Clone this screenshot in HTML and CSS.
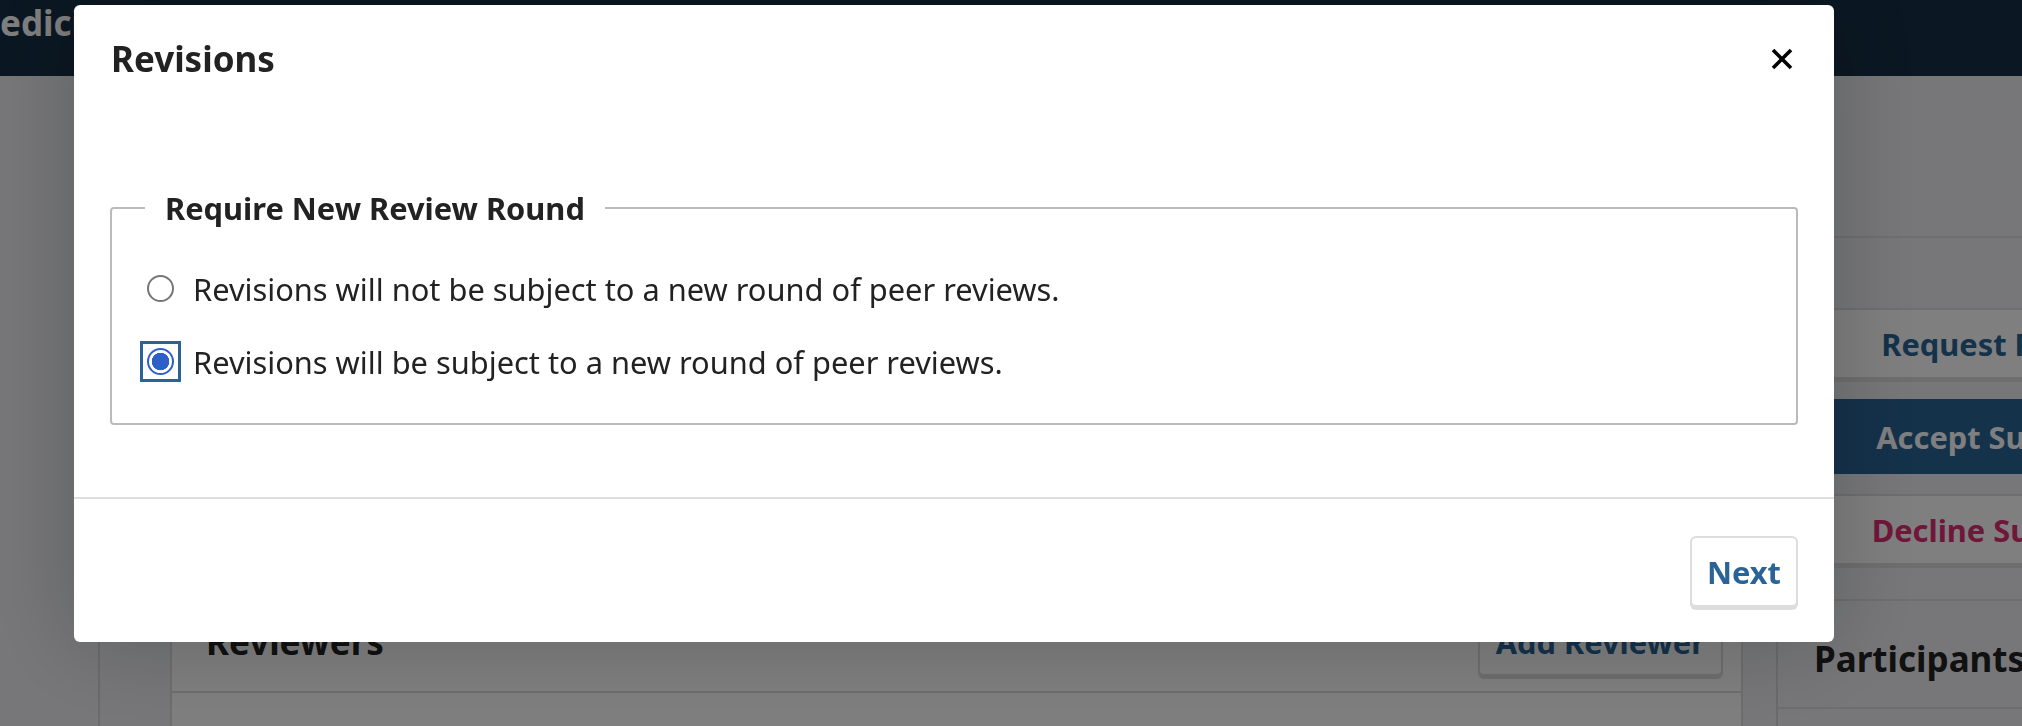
FILE: index.html
```html
<!DOCTYPE html>
<html lang="en">
<head>
<meta charset="utf-8">
<title>Revisions</title>
<link rel="stylesheet" href="styles.css">
</head>
<body>
<div class="page">
  <header class="topbar"><span class="brand">edicine</span></header>
  <div class="main">
    <div class="leftnav"></div>
    <div class="workspace">
      <section class="card">
        <div class="card-head">
          <h2 class="card-title">Reviewers</h2>
          <button class="btn btn-plain" type="button">Add Reviewer</button>
        </div>
        <div class="card-row"></div>
      </section>
    </div>
    <aside class="sidebar">
      <div class="actions">
        <button class="btn btn-side" type="button">Request Revisions</button>
        <button class="btn btn-side btn-primary" type="button">Accept Submission</button>
        <button class="btn btn-side btn-warn" type="button">Decline Submission</button>
      </div>
      <h2 class="side-title">Participants</h2>
    </aside>
  </div>
</div>
<div class="backdrop"></div>
<div class="modal" role="dialog" aria-labelledby="modal-title">
  <div class="modal-header">
    <h1 class="modal-title" id="modal-title">Revisions</h1>
    <button class="close" type="button" aria-label="Close">
      <svg width="22" height="22" viewBox="0 0 22 22"><path d="M2 2 L20 20 M20 2 L2 20" stroke="#000" stroke-width="3.6" fill="none"/></svg>
    </button>
  </div>
  <div class="modal-body">
    <fieldset class="group">
      <legend class="group-legend">Require New Review Round</legend>
      <label class="option"><span class="radio-wrap"><input type="radio" name="round" class="radio"></span><span>Revisions will not be subject to a new round of peer reviews.</span></label>
      <label class="option"><span class="radio-wrap is-focused"><input type="radio" name="round" class="radio" checked></span><span>Revisions will be subject to a new round of peer reviews.</span></label>
    </fieldset>
  </div>
  <div class="modal-footer">
    <button class="btn btn-next" type="button">Next</button>
  </div>
</div>
</body>
</html>
```
FILE: styles.css
```css
html, body {
  margin: 0;
  width: 2022px;
  height: 726px;
  overflow: hidden;
  font-family: "Noto Sans", "Open Sans", sans-serif;
}

.page {
  width: 2260px;
  height: 726px;
  background: #eeeff3;
}

.topbar {
  height: 76px;
  box-sizing: border-box;
  padding-top: 4px;
  background: #162f45;
  color: #fff;
}

.brand {
  display: block;
  font-size: 35px;
  line-height: 38px;
  font-weight: 700;
}

.main {
  display: grid;
  grid-template-columns: 98px 1678px 486px;
}

.workspace {
  border-left: 2px solid #d6d7da;
  padding: 509px 33px 0 70px;
}

.card {
  background: #fff;
  border: 2px solid #dddddd;
  border-bottom: none;
}

.card-head {
  display: flex;
  justify-content: space-between;
  align-items: center;
  padding: 20px 18px 15px 34px;
  border-bottom: 2px solid #dddddd;
}

.card-title {
  margin: 0;
  font-size: 35px;
  line-height: 48px;
  font-weight: 700;
  color: #222;
}

.card-row {
  height: 40px;
}

.btn {
  font-family: inherit;
  font-weight: 700;
  background: #fff;
  border: 2px solid #dddddd;
  border-radius: 6px;
  box-shadow: 0 3px 0 #dddddd;
  cursor: pointer;
}

.btn-plain {
  height: 69px;
  padding: 0 16px;
  font-size: 30.8px;
  color: #2a6496;
}

.sidebar {
  border-left: 2px solid #d6d7da;
  padding-top: 160px;
}

.actions {
  border-top: 2px solid #dddddd;
  border-bottom: 2px solid #dddddd;
  padding: 70px 24px 34px;
  display: flex;
  flex-direction: column;
  gap: 20px;
}

.btn-side {
  height: 71px;
  font-size: 30.8px;
  color: #2a6496;
}

.btn-primary {
  background: #2a6496;
  border-color: #2a6496;
  box-shadow: none;
  color: #fff;
  height: 75px;
}

.btn-warn {
  color: #de2f74;
}

.side-title {
  margin: 0;
  padding: 34px 0 0 36px;
  height: 72px;
  font-size: 35px;
  line-height: 48px;
  font-weight: 700;
  color: #222;
  border-bottom: 2px solid #dddddd;
}

.backdrop {
  position: fixed;
  inset: 0;
  background: rgba(0, 0, 0, 0.5);
}

.modal {
  position: fixed;
  left: 74px;
  top: 5px;
  width: 1760px;
  background: #fff;
  border-radius: 6px;
  box-shadow: 0 0 90px rgba(0, 0, 0, 0.22);
  color: #222;
}

.modal-header {
  display: flex;
  justify-content: space-between;
  align-items: center;
  padding: 33px 36px 0 37px;
}

.modal-title {
  margin: 0;
  font-size: 35px;
  line-height: 42px;
  font-weight: 700;
  color: #222;
}

.close {
  background: none;
  border: none;
  padding: 0;
  margin-right: 5px;
  width: 22px;
  height: 22px;
  display: flex;
}

.modal-body {
  padding: 109px 36px 72px;
}

.group {
  margin: 0;
  border: 2px solid #bbbbbb;
  border-radius: 4px;
  padding: 41px 33px 41px;
  display: flex;
  flex-direction: column;
  gap: 32px;
}

.group-legend {
  padding: 0 20px;
  font-size: 30.8px;
  line-height: 38px;
  font-weight: 700;
  color: #222;
}

.option {
  display: flex;
  align-items: center;
  gap: 19px;
  height: 41px;
  padding-left: 2px;
  font-size: 30.8px;
  color: #222;
}

.radio-wrap {
  position: relative;
  display: flex;
  flex: none;
}

.radio-wrap.is-focused::after {
  content: "";
  position: absolute;
  inset: -7px;
  border: 3px solid #2a6496;
}

.radio {
  appearance: none;
  -webkit-appearance: none;
  margin: 0;
  width: 27px;
  height: 27px;
  border: 2px solid #767676;
  border-radius: 50%;
  background: #fff;
}

.radio:checked {
  border-color: #2d5fc9;
  background: radial-gradient(circle, #2d5fc9 0 8.5px, #fff 9px);
}

.modal-footer {
  border-top: 2px solid #dddddd;
  padding: 37px 36px 35px;
  display: flex;
  justify-content: flex-end;
}

.btn-next {
  height: 71px;
  padding: 0 15px;
  font-size: 30.8px;
  color: #2a6496;
}
```
